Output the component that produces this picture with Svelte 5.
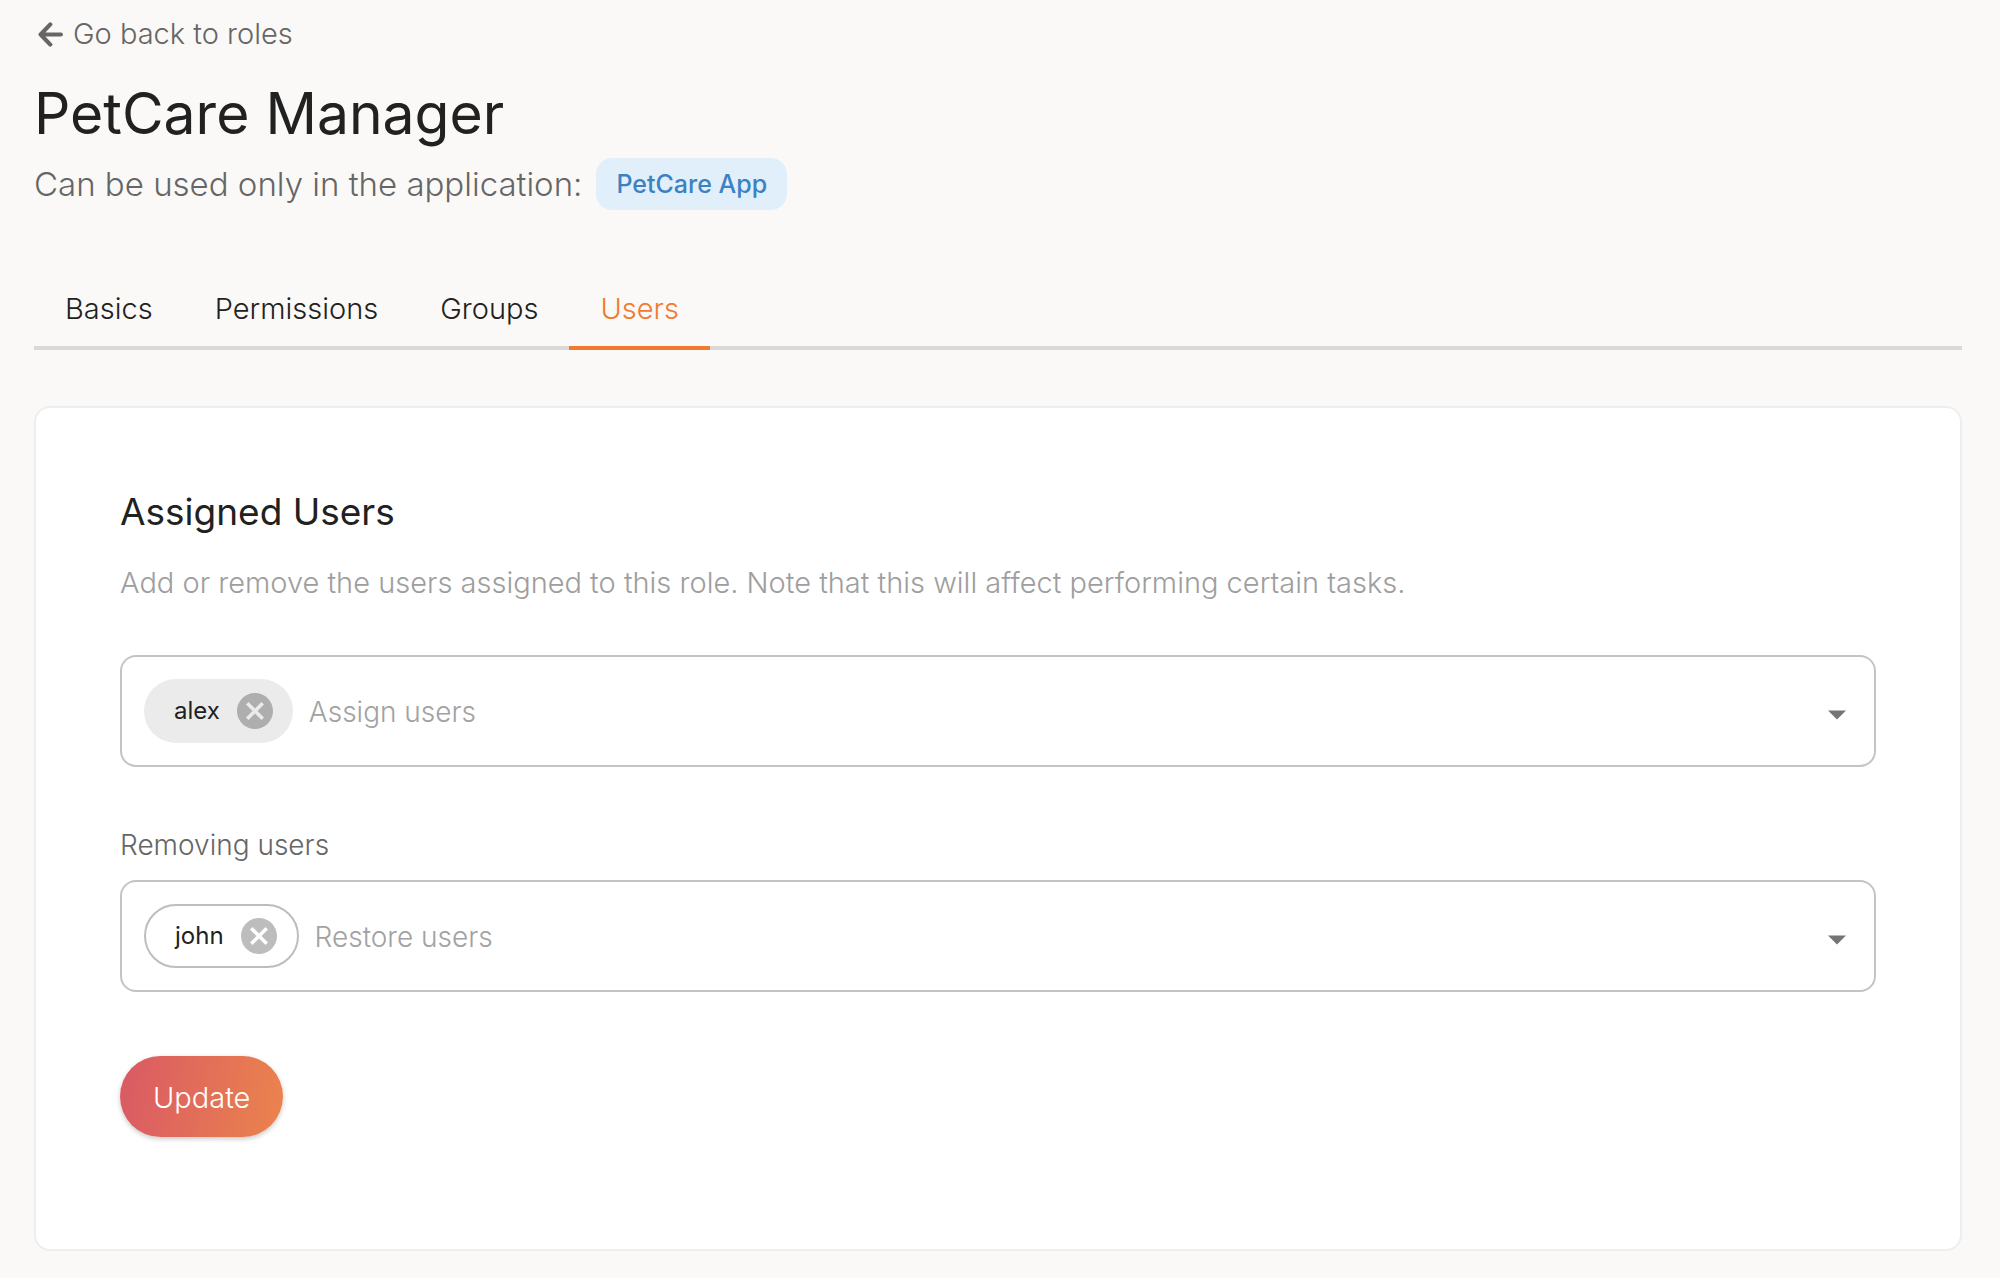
<script>
  const tabs = ['Basics', 'Permissions', 'Groups', 'Users'];
  let active = $state('Users');
  let assigned = $state(['alex']);
  let removing = $state(['john']);

  function unassign(name) {
    assigned = assigned.filter((n) => n !== name);
    removing = [...removing, name];
  }

  function restore(name) {
    removing = removing.filter((n) => n !== name);
    assigned = [...assigned, name];
  }
</script>

{#snippet field(id, label, names, placeholder, outlined, remove)}
  <div class="field">
    {#each names as name}
      <span class="chip" class:outlined>
        {name}
        <button class="chip-remove" type="button" aria-label={`Remove ${name}`} onclick={() => remove(name)}>
          <svg viewBox="2 2 20 20" aria-hidden="true">
            <path d="M12 2C6.47 2 2 6.47 2 12s4.47 10 10 10 10-4.47 10-10S17.53 2 12 2zm5 13.59L15.59 17 12 13.41 8.41 17 7 15.59 10.59 12 7 8.41 8.41 7 12 10.59 15.59 7 17 8.41 13.41 12 17 15.59z" />
          </svg>
        </button>
      </span>
    {/each}
    <input {id} type="text" {placeholder} aria-label={label} />
    <button class="toggle" type="button" aria-label={`Open ${label} list`}>
      <svg viewBox="0 0 24 24" aria-hidden="true"><path d="M7.500 11.800l4.500 4.500 4.500-4.500z" /></svg>
    </button>
  </div>
{/snippet}

<main>
  <a class="back" href="#roles">
    <svg viewBox="0 0 24 24" aria-hidden="true">
      <path d="M22 12H2.500M11.800 2.300L2.500 12l9.300 9.700" />
    </svg>
    Go back to roles
  </a>

  <h1>PetCare Manager</h1>
  <p class="scope">Can be used only in the application: <span class="app">PetCare App</span></p>

  <div class="tabs" role="tablist">
    {#each tabs as tab}
      <button type="button" role="tab" aria-selected={active === tab} onclick={() => (active = tab)}>{tab}</button>
    {/each}
  </div>

  <section class="card">
    <h2>Assigned Users</h2>
    <p class="hint">Add or remove the users assigned to this role. Note that this will affect performing certain tasks.</p>
    {@render field('assign', 'Assign users', assigned, 'Assign users', false, unassign)}
    <label class="label" for="restore">Removing users</label>
    {@render field('restore', 'Removing users', removing, 'Restore users', true, restore)}
    <button class="update" type="button">Update</button>
  </section>
</main>

<style>
  :global(body) {
    margin: 0;
    background: #faf9f7;
  }

  main {
    padding: 14px 38px 27px 34px;
    color: #212121;
    font-family: Inter, 'Liberation Sans', sans-serif;
    font-size: 29px;
    font-weight: 300;
    line-height: 40px;
  }

  button,
  input {
    margin: 0;
    padding: 0;
    border: 0;
    background: none;
    color: inherit;
    font: inherit;
  }

  button {
    cursor: pointer;
  }

  svg {
    display: block;
  }

  .back {
    display: flex;
    align-items: center;
    gap: 10px;
    width: fit-content;
    padding-left: 4px;
    color: #666;
    text-decoration: none;
  }

  .back svg {
    width: 25px;
    height: 25px;
    fill: none;
    stroke: #666;
    stroke-width: 4;
    stroke-linecap: round;
    stroke-linejoin: round;
  }

  h1 {
    margin: 24px 0 0;
    font-size: 57px;
    font-weight: 400;
    line-height: 72px;
  }

  .scope {
    display: flex;
    align-items: center;
    gap: 14px;
    margin: 8px 0 0;
    color: #666;
    font-size: 33px;
  }

  .app {
    padding: 6px 20px;
    border-radius: 16px;
    background: #e1effa;
    color: #3c82c3;
    font-size: 25px;
    font-weight: 500;
  }

  .tabs {
    display: flex;
    margin-top: 60px;
    box-shadow: inset 0 -4px #d9d9d7;
  }

  .tabs button {
    height: 80px;
    padding: 2px 31px 0;
    border-bottom: 4px solid transparent;
  }

  .tabs [aria-selected='true'] {
    border-color: #f07b2f;
    color: #f07b2f;
  }

  .card {
    margin-top: 56px;
    padding: 80px 84px 112px;
    border: 2px solid #eceeef;
    border-radius: 16px;
    background: #fff;
  }

  h2 {
    margin: 0;
    font-size: 37px;
    font-weight: 400;
    line-height: 48px;
  }

  .hint {
    margin: 27px 0 52px;
    color: #9e9e9e;
  }

  .field {
    display: flex;
    align-items: center;
    padding: 22px;
    border: 2px solid #c4c4c4;
    border-radius: 16px;
  }

  .chip {
    display: flex;
    align-items: center;
    gap: 17px;
    box-sizing: border-box;
    height: 64px;
    margin-right: 16px;
    padding: 0 20px 0 30px;
    border-radius: 32px;
    background: #ebebeb;
    color: #212121;
    font-size: 24px;
    font-weight: 400;
  }

  .chip.outlined {
    padding: 0 20px 0 29px;
    border: 2px solid #bdbdbd;
    background: #fff;
  }

  .chip-remove svg {
    width: 36px;
    height: 36px;
    fill: #aeaeae;
  }

  .outlined .chip-remove svg {
    fill: #bdbdbd;
  }

  input {
    flex: 1;
    min-width: 0;
    height: 64px;
    box-sizing: border-box;
    padding-top: 2px;
    outline: 0;
    font-size: 28px;
  }

  input::placeholder {
    color: #a2a2a2;
    opacity: 1;
  }

  .toggle svg {
    width: 48px;
    height: 48px;
    fill: #757575;
  }

  .toggle {
    margin-right: -9px;
  }

  .label {
    display: block;
    margin: 58px 0 15px;
    color: #666;
    font-size: 28px;
  }

  .update {
    display: block;
    height: 81px;
    margin-top: 64px;
    padding: 2px 33px 0;
    border-radius: 41px;
    background: linear-gradient(100deg, #d95965, #eb844c);
    box-shadow: 0 2px 5px rgb(0 0 0 / 22%);
    color: #fff;
  }
</style>
